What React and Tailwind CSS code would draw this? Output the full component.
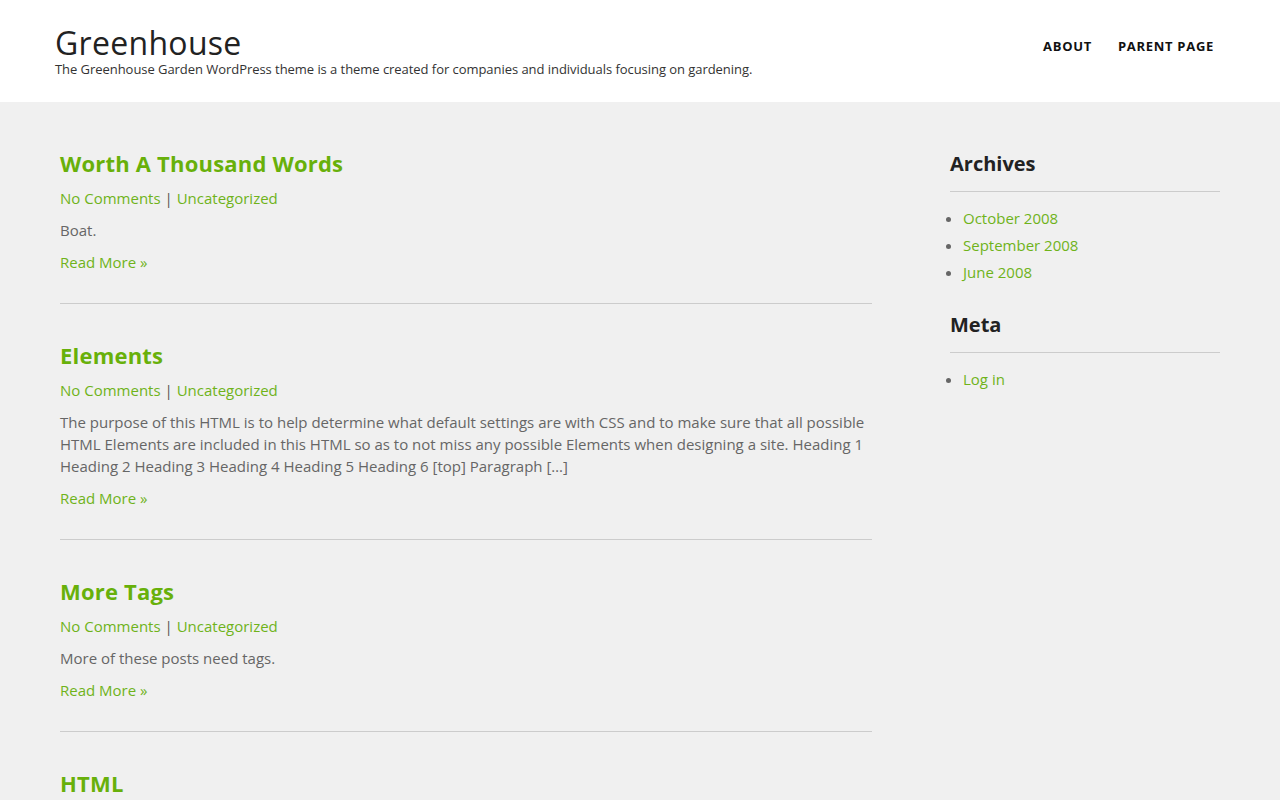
import React from "react";

const font = { fontFamily: '"Open Sans", "Liberation Sans", sans-serif' };

const posts = [
  { title: "Worth A Thousand Words", body: ["Boat."] },
  {
    title: "Elements",
    body: [
      "The purpose of this HTML is to help determine what default settings are with CSS and to make sure that all possible HTML Elements are included in this HTML so as to not miss any possible Elements when designing a site. Heading 1 Heading 2 Heading 3 Heading 4 Heading 5 Heading 6 [top] Paragraph […]",
    ],
  },
  { title: "More Tags", body: ["More of these posts need tags."] },
  { title: "HTML", body: ["A sample post with HTML."] },
];

function Post({ post, last }) {
  return (
    <article className={last ? "" : "border-b border-[#cccccc] pb-[30px] mb-[39px]"}>
      <h2 className="text-[22px] leading-[24px] font-bold tracking-[0.2px] text-[#68b00a]">
        <a href="#">{post.title}</a>
      </h2>
      <div className="mt-[12px] text-[15px] leading-[22px] text-[#555]">
        <a href="#" className="text-[#6fb31a]">No Comments</a> |{" "}
        <a href="#" className="text-[#6fb31a]">Uncategorized</a>
      </div>
      <p className="mt-[10px] text-[15px] leading-[22px] text-[#666]">{post.body}</p>
      <div className="mt-[10px] text-[15px] leading-[22px]">
        <a href="#" className="text-[#6fb31a]">Read More »</a>
      </div>
    </article>
  );
}

function Widget({ title, items }) {
  return (
    <section className="mb-[27px]">
      <h3 className="text-[20px] leading-[24px] font-bold text-[#222]">{title}</h3>
      <div className="mt-[15px] border-t border-[#cccccc]" />
      <ul className="mt-[13px] list-disc pl-[13px] text-[#666] marker:text-[#666]">
        {items.map((it) => (
          <li key={it} className="text-[15px] leading-[27px]">
            <a href="#" className="text-[#6fb31a]">{it}</a>
          </li>
        ))}
      </ul>
    </section>
  );
}

export default function App() {
  return (
    <div style={font} className="h-[800px] bg-[#f0f0f0] overflow-hidden">
      <header className="bg-white h-[102px] px-[55px] flex items-start justify-between">
        <div className="pt-[25px]">
          <div className="text-[32px] leading-[36px] tracking-[0.3px] text-[#222]">Greenhouse</div>
          <div className="text-[13px] leading-[16px] tracking-[-0.05px] text-[#333]">
            The Greenhouse Garden WordPress theme is a theme created for companies and individuals focusing on gardening.
          </div>
        </div>
        <nav className="pt-[38px] flex gap-[26px] pr-[11px] text-[13px] leading-[16px] font-bold tracking-[0.7px] text-[#111] uppercase">
          <a href="#">About</a>
          <a href="#">Parent Page</a>
        </nav>
      </header>
      <div className="flex px-[60px] gap-[78px]">
        <main className="w-[812px] pt-[49px]">
          {posts.map((p, i) => (
            <Post key={p.title} post={p} last={i === posts.length - 1} />
          ))}
        </main>
        <aside className="w-[270px] pt-[50px]">
          <Widget title="Archives" items={["October 2008", "September 2008", "June 2008"]} />
          <Widget title="Meta" items={["Log in"]} />
        </aside>
      </div>
    </div>
  );
}
